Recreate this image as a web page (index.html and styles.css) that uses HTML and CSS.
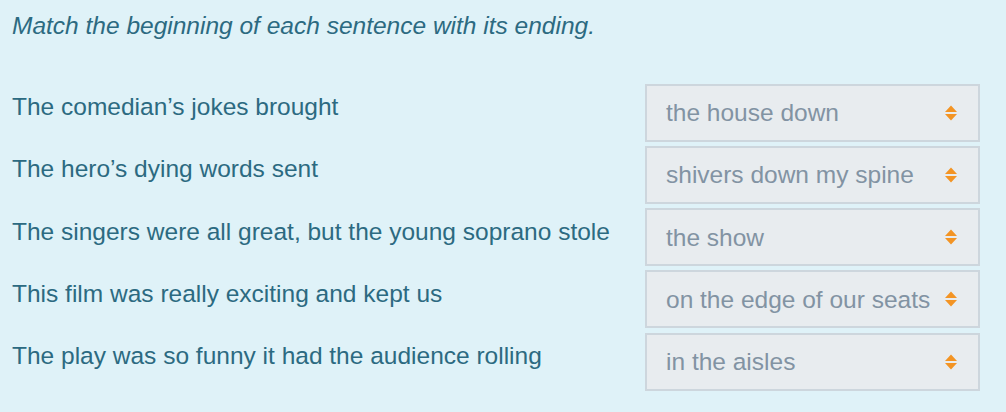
FILE: index.html
```html
<!DOCTYPE html>
<html lang="en">
<head>
<meta charset="utf-8">
<title>Match the sentences</title>
<link rel="stylesheet" href="styles.css">
</head>
<body>
<main class="exercise">
  <p class="instructions">Match the beginning of each sentence with its ending.</p>
  <div class="pairs">
    <div class="stem">The comedian’s jokes brought</div>
    <div class="choice"><span class="choice-text">the house down</span><svg class="sort" viewBox="0 0 12 16" width="12" height="16"><path d="M0 7 L6 0.5 L12 7 Z M0 9 L12 9 L6 15.5 Z"/></svg></div>

    <div class="stem">The hero’s dying words sent</div>
    <div class="choice"><span class="choice-text">shivers down my spine</span><svg class="sort" viewBox="0 0 12 16" width="12" height="16"><path d="M0 7 L6 0.5 L12 7 Z M0 9 L12 9 L6 15.5 Z"/></svg></div>

    <div class="stem">The singers were all great, but the young soprano stole</div>
    <div class="choice"><span class="choice-text">the show</span><svg class="sort" viewBox="0 0 12 16" width="12" height="16"><path d="M0 7 L6 0.5 L12 7 Z M0 9 L12 9 L6 15.5 Z"/></svg></div>

    <div class="stem">This film was really exciting and kept us</div>
    <div class="choice"><span class="choice-text">on the edge of our seats</span><svg class="sort" viewBox="0 0 12 16" width="12" height="16"><path d="M0 7 L6 0.5 L12 7 Z M0 9 L12 9 L6 15.5 Z"/></svg></div>

    <div class="stem">The play was so funny it had the audience rolling</div>
    <div class="choice"><span class="choice-text">in the aisles</span><svg class="sort" viewBox="0 0 12 16" width="12" height="16"><path d="M0 7 L6 0.5 L12 7 Z M0 9 L12 9 L6 15.5 Z"/></svg></div>
  </div>
</main>
</body>
</html>
```
FILE: styles.css
```css
html, body {
  margin: 0;
  padding: 0;
  background: #dff2f8;
}

body {
  font-family: "Liberation Sans", Arial, sans-serif;
  font-size: 24.5px;
  line-height: 28px;
  color: #2c6a81;
}

.exercise {
  padding: 11.5px 0 0 12px;
}

.instructions {
  margin: 0 0 44px 0;
  font-style: italic;
}

.pairs {
  display: grid;
  grid-template-columns: 633px 335px;
  grid-auto-rows: 58px;
  row-gap: 4.25px;
}

.stem {
  padding-top: 9.5px;
  white-space: nowrap;
}

.choice {
  box-sizing: border-box;
  display: flex;
  align-items: center;
  justify-content: space-between;
  padding: 1px 21px 0 19px;
  background: #e8ecef;
  border: 2px solid #cdd6dd;
  color: #8293a3;
}

.choice-text {
  white-space: nowrap;
}

.sort {
  flex: none;
  margin-top: -1px;
  fill: #f39424;
}
```
